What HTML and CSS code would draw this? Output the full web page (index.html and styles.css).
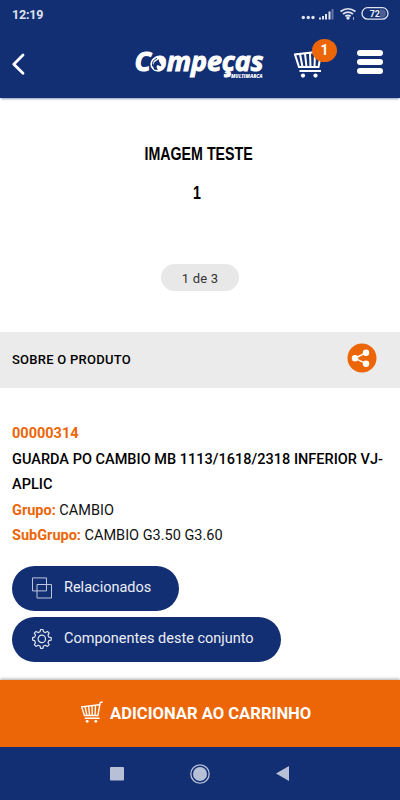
FILE: index.html
```html
<!DOCTYPE html>
<html lang="pt-BR">
<head>
<meta charset="utf-8">
<meta name="viewport" content="width=device-width">
<title>Compeças</title>
<link rel="stylesheet" href="styles.css">
</head>
<body>
<svg class="defs" width="0" height="0">
  <symbol id="cart" viewBox="0 0 32 32">
    <g fill="none" stroke="#fff" stroke-width="2">
      <path d="M31.5 1.5 L28 2.2 L24.5 21 H5 L1 8.5 L26.5 5.5"/>
      <path d="M6 8 L8.5 21 M11 7.5 L12.5 21 M16 7 L16.5 21 M21 6.5 L20.5 21 M5.5 25 H27"/>
    </g>
    <circle cx="9" cy="29.6" r="2.1" fill="#fff"/><circle cx="21.5" cy="29.6" r="2.1" fill="#fff"/>
  </symbol>
</svg>
<div class="app">
  <div class="status">
    <span class="clock">12:19</span>
    <svg class="signals" width="90" height="20" viewBox="0 0 90 20">
      <g fill="#dfe3ee">
        <circle cx="3.300" cy="13.5" r="1.7"/><circle cx="8.300" cy="13.5" r="1.7"/><circle cx="13" cy="13.5" r="1.7"/>
        <path d="M19 13.500h2v2h-2zM22 12h2v3.500h-2zM25 10h2v5.500h-2zM28.500 7.500h2v8h-2z"/>
        <path d="M31.500 5h2v10.500h-2z" opacity=".4"/>
        <circle cx="48" cy="14" r="1.700"/>
        <path d="M53 13h1v3h-1z" opacity=".7"/>
      </g>
      <g fill="none" stroke="#dfe3ee" stroke-width="1.700">
        <path d="M40.500 7.500q7.500-5.500 15 0M43 10q5-3.800 10 0M45.300 12.300q2.700-2 5.400 0"/>
        <rect x="62" y="3.700" width="26" height="11.500" rx="5.700" stroke-width="1.300"/>
      </g>
      <path d="M80 5.200h1.500q4.500 0 4.500 4.200t-4.500 4.300H80z" fill="#4a5f94"/>
      <text x="74.800" y="12.800" class="battery">72</text>
    </svg>
  </div>
  <header class="header">
    <svg class="back" width="14" height="24" viewBox="0 0 14 24"><path d="M12 3 2.800 12.200 12 21.300" fill="none" stroke="#fff" stroke-width="2.800" stroke-linecap="round" stroke-linejoin="round"/></svg>
    <svg class="logo" width="134" height="36" viewBox="0 0 134 36">
      <text class="brand" x="1.500" y="22.800" textLength="129" lengthAdjust="spacingAndGlyphs">Compeças</text>
      <circle cx="24.500" cy="16" r="7.200" fill="#fff"/>
      <path d="M21.500 21.800q-3-4 0-7.500l2-1.500 2-1.500 1 3 2 3-1 1-3-1.300q-2 2 .5 5z" fill="#132f73"/>
      <path d="M19.500 18.300q-.8-6 4.500-8" fill="none" stroke="#132f73" stroke-width="1"/>
      <text class="tag" x="98" y="29.600" textLength="31.500" lengthAdjust="spacingAndGlyphs">MULTIMARCA</text>
    </svg>
    <div class="basket">
      <svg width="32" height="32"><use href="#cart"/></svg>
      <span class="badge">1</span>
    </div>
    <div class="menu"><i></i><i></i><i></i></div>
  </header>
  <section class="gallery">
    <div class="slide-title">IMAGEM TESTE</div>
    <div class="slide-number">1</div>
    <div class="counter">1 de 3</div>
  </section>
  <div class="section-bar">
    <h2>SOBRE O PRODUTO</h2>
    <svg width="30" height="30" viewBox="0 0 30 30">
      <circle cx="15" cy="15" r="14.500" fill="#ec6608"/>
      <path d="M19 9.700 8 15.300 19 20.700" fill="none" stroke="#fff" stroke-width="1.500"/>
      <g fill="#fff"><circle cx="19" cy="9.700" r="3.200"/><circle cx="8" cy="15.300" r="3.200"/><circle cx="19" cy="20.700" r="3.200"/></g>
    </svg>
  </div>
  <main class="details">
    <div class="code">00000314</div>
    <div class="name">GUARDA PO CAMBIO MB 1113/1618/2318 INFERIOR VJ-<br>APLIC</div>
    <div class="group"><b>Grupo:</b> CAMBIO</div>
    <div class="subgroup"><b>SubGrupo:</b> CAMBIO G3.50 G3.60</div>
    <div class="actions">
      <a class="pill related">
        <svg width="20" height="22" viewBox="0 0 20 22" fill="none" stroke="#bdc5da"><path d="M.5.900h14v13h-14z"/><path d="M5 7.500h14.500v13.500h-14.500z"/></svg>
        <span>Relacionados</span>
      </a>
      <a class="pill components">
        <svg width="20" height="22" viewBox="0 0 20 22" fill="none" stroke="#dfe3ee" stroke-width="1.200" stroke-linejoin="round">
          <path d="M8 3.800 8.600 1.500h2.300l.6 2.300 2 .8 2-1.200 1.700 1.700-1.200 2 .8 2 2.400.6v2.400l-2.400.6-.8 2 1.200 2-1.700 1.700-2-1.200-2 .8-.6 2.300H8.600L8 18l-2-.8-2 1.200-1.700-1.700 1.200-2-.8-2-2.100-.6V9.700l2.100-.6.8-2-1.200-2L4 3.400l2 1.200z"/><circle cx="9.800" cy="10.900" r="3.700"/>
        </svg>
        <span>Componentes deste conjunto</span>
      </a>
    </div>
  </main>
  <div class="buy"><svg width="22" height="22"><use href="#cart"/></svg><span>ADICIONAR AO CARRINHO</span></div>
  <nav class="system">
    <svg width="14" height="14"><rect width="14" height="13.500" rx="1" fill="#b8c0d7"/></svg>
    <svg width="20" height="20"><circle cx="10" cy="10" r="9.200" fill="none" stroke="#b8c0d7" stroke-width="1.300"/><circle cx="10" cy="10" r="7" fill="#b8c0d7"/></svg>
    <svg width="13" height="15"><path d="M0 7.500 13 0v15z" fill="#b8c0d7"/></svg>
  </nav>
</div>
</body>
</html>
```
FILE: styles.css
```css
* { box-sizing: border-box; }
body { margin: 0; background: #fff; font-family: Roboto, sans-serif; color: #111; }
.defs { display: none; }
svg { display: block; flex: none; overflow: visible; }
.app { width: 400px; height: 800px; display: flex; flex-direction: column; overflow: hidden; }
.status { height: 28px; flex: none; background: #132f73; display: flex; justify-content: space-between; padding: 4px 10px 0 12px; }
.clock { font-size: 12.500px; font-weight: 700; line-height: 21px; color: #dfe3ee; letter-spacing: -.2px; }
.battery { font: 700 9px Roboto, sans-serif; fill: #eef0f7; text-anchor: middle; }
.header { height: 70px; flex: none; background: #132f73; display: flex; align-items: flex-start; box-shadow: 0 2px 2px -1px #8c9ab9; }
.back { margin: 24px 0 0 11px; }
.logo { margin: 20px 0 0 108px; }
.brand { font: italic 700 27.500px "Open Sans", sans-serif; fill: #fff; stroke: #fff; stroke-width: 1px; }
.tag { font: italic 800 5px "Open Sans", sans-serif; fill: #fff; }
.basket { position: relative; margin: 18px 0 0 27px; }
.badge { position: absolute; left: 18px; top: -7px; width: 25px; height: 23px; border-radius: 50%; background: #ec6608; color: #fff; font-size: 14px; font-weight: 700; line-height: 22px; text-align: center; }
.menu { margin: 22px 0 0 31px; display: flex; flex-direction: column; gap: 3.700px; }
.menu i { width: 26px; height: 5.500px; border-radius: 3px; background: #fff; }
.gallery { height: 234px; flex: none; display: flex; flex-direction: column; align-items: center; padding-top: 45px; }
.slide-title, .slide-number { font: 700 17.500px/22px "Liberation Sans", sans-serif; color: #000; transform: scaleX(.812); margin-left: -3px; white-space: nowrap; }
.slide-number { margin: 17px 0 0 -6px; }
.counter { width: 78px; height: 27px; margin-top: 60px; border-radius: 14px; background: #e8e8e8; color: #333; font-size: 13px; line-height: 29px; letter-spacing: .2px; text-align: center; }
.section-bar { height: 56px; flex: none; background: #ebebeb; display: flex; align-items: center; justify-content: space-between; padding: 0 23px 4px 12px; }
h2 { margin: 3px 0 0; font-size: 13px; font-weight: 500; line-height: 20px; letter-spacing: .25px; color: #000; }
.details { flex: 1; padding: 33px 12px 0; font-size: 14.500px; line-height: 25.500px; white-space: nowrap; }
.code, .details b { color: #ec6608; font-weight: 700; }
.name { font-weight: 500; color: #000; letter-spacing: .02px; }
.actions { display: flex; flex-direction: column; align-items: flex-start; gap: 6px; margin-top: 17px; }
.pill { height: 45px; border-radius: 23px; background: #132f73; color: #eceef5; display: flex; align-items: center; padding-left: 20px; gap: 12px; }
.pill span { margin-top: -1px; }
.related { width: 167px; }
.components { width: 269px; }
.buy { height: 67px; flex: none; background: #ec6608; color: #fff; display: flex; align-items: center; padding: 0 0 0 81px; gap: 7px; font-size: 16.600px; font-weight: 700; box-shadow: 0 -1px 3px #aaa; }
.buy svg { margin-top: -4px; }
.system { height: 53px; flex: none; background: #132f73; display: flex; align-items: center; padding-left: 110px; gap: 66px; }
```
